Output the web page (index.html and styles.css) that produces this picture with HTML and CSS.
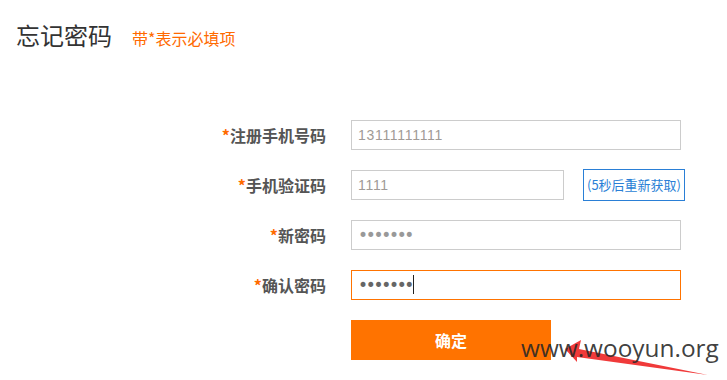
FILE: index.html
```html
<!DOCTYPE html>
<html lang="zh-CN">
<head>
<meta charset="utf-8">
<title>忘记密码</title>
<link rel="stylesheet" href="styles.css">
</head>
<body>
<div class="page">
  <div class="header">
    <h1 class="title">忘记密码</h1>
    <span class="hint">带*表示必填项</span>
  </div>
  <form class="form">
    <label class="label"><span class="star">*</span>注册手机号码</label>
    <div class="field"><input class="input input-wide muted" type="text" value="13111111111"></div>

    <label class="label"><span class="star">*</span>手机验证码</label>
    <div class="field field-code">
      <input class="input input-code muted" type="text" value="1111">
      <button class="code-btn" type="button">(5秒后重新获取)</button>
    </div>

    <label class="label"><span class="star">*</span>新密码</label>
    <div class="field"><input class="input input-wide pwd muted" type="password" value="1111111"></div>

    <label class="label"><span class="star">*</span>确认密码</label>
    <div class="field field-caret">
      <input class="input input-wide pwd active" type="password" value="1111111">
      <span class="caret"></span>
    </div>

    <div class="label"></div>
    <div class="field field-submit"><button class="submit" type="button">确定</button></div>
  </form>
  <div class="watermark">
    <svg class="arrow" width="160" height="45" viewBox="560 335 160 45">
      <path d="M565,349 L581,340 L579,349 L708,375 L577,357 L577,362 Z" fill="#f03a3a"/>
    </svg>
    <span class="wm-text">www.wooyun.org</span>
  </div>
</div>
</body>
</html>
```
FILE: styles.css
```css
* { box-sizing: border-box; }
html, body { margin: 0; padding: 0; background: #fff; }
body {
  font-family: "Noto Sans CJK SC", "Noto Sans", sans-serif;
  color: #333;
  width: 727px;
  height: 380px;
  overflow: hidden;
}
.page { position: relative; width: 727px; height: 380px; }

.header {
  display: flex;
  align-items: baseline;
  gap: 20px;
  padding: 20px 0 0 16px;
}
.title {
  margin: 0;
  font-size: 24px;
  font-weight: normal;
  line-height: 30px;
  color: #333;
}
.hint {
  font-size: 16px;
  color: #ff6a00;
  line-height: 20px;
}

.form {
  display: grid;
  grid-template-columns: 326px 340px;
  grid-auto-rows: 30px;
  column-gap: 25px;
  row-gap: 20px;
  margin-top: 70px;
}
.field-submit { height: 40px; }
.label {
  align-self: center;
  text-align: right;
  font-size: 16px;
  font-weight: bold;
  color: #555;
  line-height: 20px;
}
.star { color: #ff6a00; }
.field { display: flex; align-items: center; }
.field-code { gap: 19px; }
.field-caret { position: relative; }

.input {
  flex-shrink: 0;
  height: 30px;
  border: 1px solid #ccc;
  padding: 0 6px;
  font-family: "Liberation Sans", sans-serif;
  font-size: 14px;
  letter-spacing: 0.7px;
  outline: none;
  background: #fff;
}
.input-wide { width: 330px; }
.input-code { width: 213px; }
.muted { color: #a09a96; }
.pwd { font-family: "DejaVu Sans", sans-serif; font-size: 17px; letter-spacing: -2.3px; }
.pwd.muted { color: #999; }
.active { border-color: #ff7300; color: #666; }
.caret {
  position: absolute;
  left: 62px;
  top: 5px;
  width: 1px;
  height: 19px;
  background: #222;
}

.code-btn {
  flex-shrink: 0;
  width: 102px;
  height: 32px;
  border: 1px solid #2a7fd6;
  background: #fff;
  color: #2a7fd6;
  font-family: "Noto Sans CJK SC", sans-serif;
  font-size: 13px;
  padding: 0;
  line-height: 30px;
}

.submit {
  width: 200px;
  height: 40px;
  border: none;
  background: #ff7300;
  color: #fff;
  font-family: "Noto Sans CJK SC", sans-serif;
  font-size: 16px;
  font-weight: bold;
  padding: 0;
}

.watermark {
  position: absolute;
  left: 0;
  top: 0;
  width: 727px;
  height: 380px;
  pointer-events: none;
}
.arrow { position: absolute; left: 560px; top: 335px; }
.wm-text {
  position: absolute;
  left: 521px;
  top: 332px;
  font-family: "Open Sans", sans-serif;
  font-size: 24.4px;
  line-height: 32px;
  color: rgba(40, 40, 40, 0.9);
}
```
